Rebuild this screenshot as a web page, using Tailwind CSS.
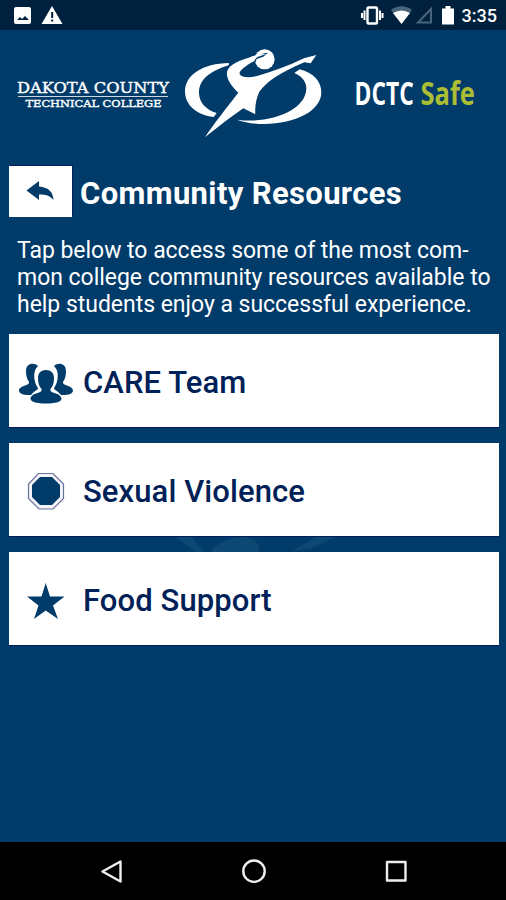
<!DOCTYPE html>
<html lang="en">
<head>
    <meta charset="UTF-8">
    <meta name="viewport" content="width=device-width, initial-scale=1.0">
    <title>DCTC Safe - Community Resources</title>
    <script src="https://cdn.jsdelivr.net/npm/@tailwindcss/browser@4"></script>
</head>
<body class="bg-[#003b6a] font-['Roboto',sans-serif] text-white">

    <div class="flex flex-col w-[506px] h-[900px] overflow-hidden">

        <!-- Status bar -->
        <div class="flex items-center justify-between h-[30px] bg-[#00213d] shrink-0">
            <svg class="w-[70px] h-[30px]" viewBox="0 0 70 30">
                <rect x="14" y="7" width="17" height="17" rx="2" fill="#fff"/>
                <path d="M17 20l3-3 2 2 3-3 4 4z" fill="#00213d"/>
                <path d="M52 6L62.500 24H41.500z" fill="#fff"/>
                <path d="M51.200 12h2v6h-2zM51.200 19.500h2v2h-2z" fill="#00213d"/>
            </svg>
            <div class="flex items-center pr-[9px]">
                <svg class="w-[101px] h-[30px]" viewBox="360 0 101 30">
                    <path d="M362 13v5M364.500 10.500v9.500M382.500 13v5M380 10.500v9.500" stroke="#fff" stroke-width="2"/>
                    <rect x="367.500" y="7.500" width="9.500" height="16" rx="1" fill="none" stroke="#fff" stroke-width="2.400"/>
                    <path d="M391 10Q401.500 2.500 412 10L401.500 24z" fill="#49647c"/>
                    <path d="M393 13Q401.500 8 410 13L401.500 24z" fill="#fff"/>
                    <path d="M431 9V22.500H418z" fill="none" stroke="#49647c" stroke-width="2"/>
                    <path d="M442 8.500h3.500V6h5v2.500H454V24.500H442z" fill="#fff"/>
                </svg>
                <span class="w-[36px] text-right text-[18px] leading-[30px] font-medium pt-[2px]">3:35</span>
            </div>
        </div>

        <!-- Header logos -->
        <header class="h-[136px] shrink-0">
            <svg class="w-[506px] h-[136px]" viewBox="0 30 506 136">
                <g fill="#fff" stroke="#fff" font-family="'DejaVu Serif', serif">
                    <text x="17" y="92.500" font-size="15.500" stroke-width=".4" textLength="152" lengthAdjust="spacingAndGlyphs">DAKOTA COUNTY</text>
                    <path d="M18 96.500H168" stroke-width="1" opacity=".8"/>
                    <text x="25.500" y="107.300" font-size="10" stroke-width=".4" textLength="136" lengthAdjust="spacingAndGlyphs">TECHNICAL COLLEGE</text>
                </g>
                <g transform="translate(176 40) scale(.33333)" fill="#fff">
                    <path d="M159 69C80 70 27 105 27 154C27 198 66 226 113 231L122 219C91 209 69 188 69 158C69 116 108 91 158 76z"/>
                    <path d="M371 88C411 98 436 124 436 157C436 213 357 252 265 252C235 252 206 248 183 239C283 253 391 211 391 145C391 124 377 108 355 99z"/>
                    <circle cx="266" cy="58" r="30"/>
                    <path d="M276 38Q254 40 224 51C170 67 150 83 153 105C155 124 171 143 187 158C169 181 116 248 87 292C123 263 170 227 202 205L238 223C236 194 242 173 250 155C274 123 313 98 385 67L404 70L421 45L384 55C335 78 290 95 246 107C221 114 197 113 191 102C188 93 207 78 231 65L250 52L273 44z"/>
                    <path d="M236 52Q258 39 276 38L262 50L242 57L237 70" fill="#003b6a"/>
                    <path d="M224 51L252 43L271 42L244 51L231 65z"/>
                </g>
                <g font-family="'Open Sans', sans-serif" font-weight="bold" font-size="31.500">
                    <text transform="translate(354.500 105) scale(.725 1)" fill="#fff">DCTC</text>
                    <text transform="translate(420.500 105) scale(.81 1)" fill="#abbd32">Safe</text>
                </g>
            </svg>
        </header>

        <!-- Page title -->
        <div class="flex items-center h-[51px] pl-[9px] shrink-0">
            <a href="#" class="flex w-[63px] h-[51px] bg-white shadow-[1px_-1px_0_#001f60]">
                <svg class="w-[63px] h-[51px]" viewBox="9 166 63 51">
                    <path d="M26.500 190.500L39 181V186.500C49 187.500 53 192 53.500 200C49.500 195.500 46 194.500 39 194.500V200z" fill="#003b6a"/>
                </svg>
            </a>
            <h1 class="pl-[8px] pt-[4px] text-[31px] leading-[40px] font-bold tracking-[0.35px] whitespace-nowrap">Community Resources</h1>
        </div>

        <p class="pl-[17px] pt-[20px] h-[117px] shrink-0 text-[23px] leading-[27px] tracking-[-0.03px] whitespace-nowrap">
            Tap below to access some of the most com-<br>
            mon college community resources available to<br>
            help students enjoy a successful experience.
        </p>

        <!-- Resource list -->
        <div class="relative flex flex-col gap-[16px] pl-[9px] pr-[7px] text-[#002158] text-[31px] leading-[40px] font-medium tracking-[0.1px]">
            <svg class="absolute left-[170px] top-[203px] w-[170px] h-[15px]" viewBox="0 0 170 15">
                <path d="M5 0h17l12 15H26zM42 12Q56 0 75 0q16 3 14 15H42zM140 12L165 0h-19l-24 14z" fill="#0d4774"/>
            </svg>
            <a href="#" class="relative flex items-center h-[93px] bg-white shadow-[0_1px_0_#001b5c]">
                <svg class="w-[74px] h-[93px]" viewBox="9 334 74 93">
                    <g fill="#003b6a">
                        <path d="M38 366C34 362 26 363 26 371C26 376 27 379 29 382C30 386 19 385 19 391C20 395 26 395 31 395C34 391 38 390 38 388C34 383 32 371 38 366z"/>
                        <path d="M54 366C58 362 66 363 66 371C66 376 65 379 63 382C62 386 73 385 73 391C72 395 66 395 61 395C58 391 54 390 54 388C58 383 60 371 54 366z"/>
                        <path d="M46 370C41 370 38 373 38 378C38 383 39 386 41.500 389C43 394 31 392 30.500 399C31 402 37 403.500 46 403.500C55 403.500 61 402 61.500 399C61 392 49 394 50.500 389C53 386 54 383 54 378C54 373 51 370 46 370z"/>
                    </g>
                </svg>
                <span class="pt-[4px]">CARE Team</span>
            </a>
            <a href="#" class="relative flex items-center h-[93px] bg-white shadow-[0_1px_0_#001b5c]">
                <svg class="w-[74px] h-[93px]" viewBox="9 443 74 93">
                    <path d="M38.500 473.500H53L63.500 484V498.500L53 509H39L28.500 498.500V484z" fill="#f4f4f8" stroke="#68739b" stroke-width="1.200"/>
                    <path d="M40 477H52L60 485V497L52 505H40L32 497V485z" fill="#003b6a"/>
                </svg>
                <span class="pt-[4px]">Sexual Violence</span>
            </a>
            <a href="#" class="relative flex items-center h-[93px] bg-white shadow-[0_1px_0_#001b5c]">
                <svg class="w-[74px] h-[93px]" viewBox="9 552 74 93">
                    <path d="M45.700 583L50 596.500H64.500L53 605.500L58 619L45.700 610.500L34 619L38.500 605.500L27 596.500H41.500z" fill="#003b6a"/>
                </svg>
                <span class="pt-[4px]">Food Support</span>
            </a>
        </div>

        <!-- Android navigation -->
        <nav class="mt-auto h-[58px] bg-black shrink-0">
            <svg class="w-[506px] h-[58px]" viewBox="0 842 506 58" fill="none" stroke="#eee" stroke-width="2.400" stroke-linejoin="round">
                <path d="M120.500 861.500V881.500L102.500 871.500z"/>
                <circle cx="254" cy="871.200" r="10.700"/>
                <rect x="387" y="862" width="18.500" height="18.500"/>
            </svg>
        </nav>
    </div>

</body>
</html>
